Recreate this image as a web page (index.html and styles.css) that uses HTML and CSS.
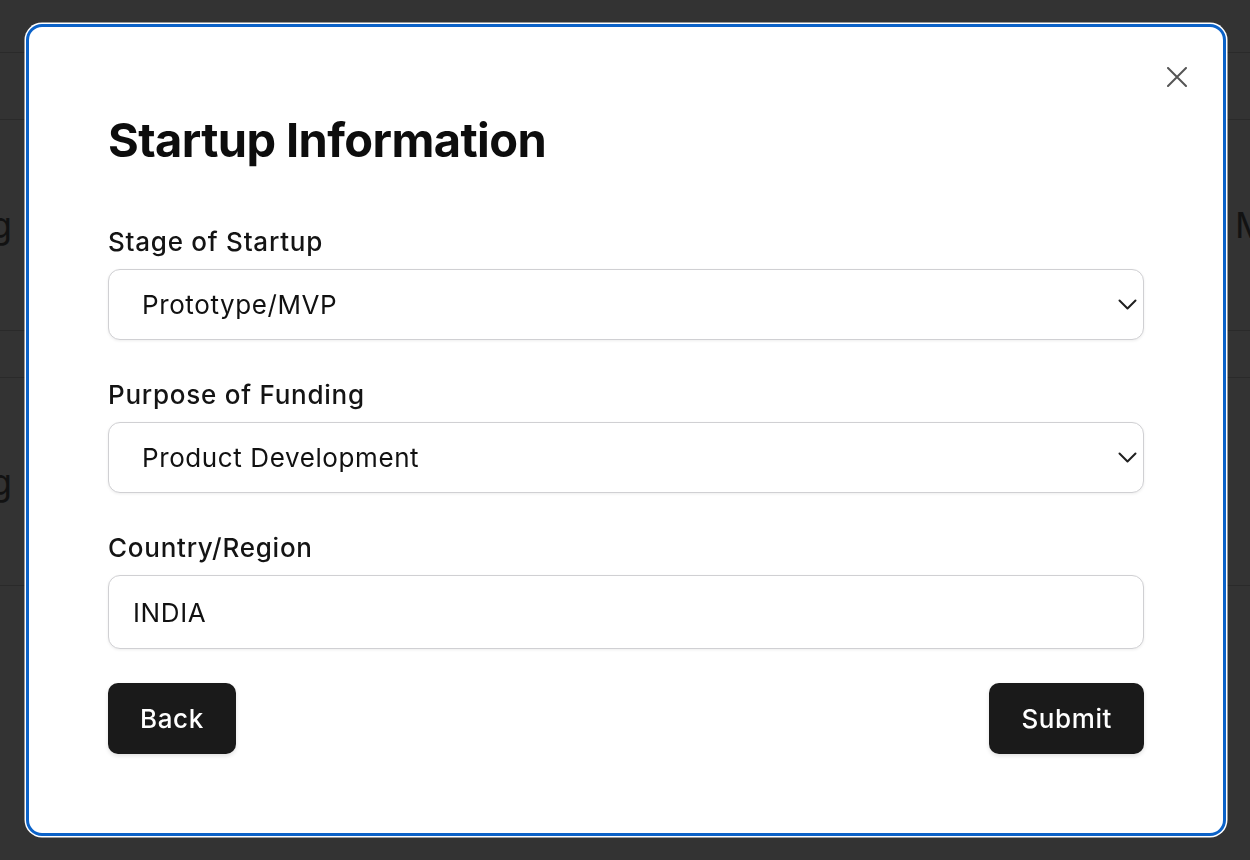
FILE: index.html
```html
<!DOCTYPE html>
<html lang="en">
<head>
<meta charset="utf-8">
<title>Startup Information</title>
<link rel="stylesheet" href="styles.css">
</head>
<body>
<div class="page">
  <div class="row row-head"></div>
  <div class="row row-sub"></div>
  <div class="row row-tall">
    <div class="cell-left"><span>Funding</span></div>
    <div class="cell-right"><span>Market</span></div>
  </div>
  <div class="row row-thin"></div>
  <div class="row row-tall2">
    <div class="cell-left"><span>Pricing</span></div>
  </div>
  <div class="row row-rest"></div>
</div>

<div class="overlay">
  <div class="modal" role="dialog" aria-labelledby="modal-title">
    <button class="close" aria-label="Close">
      <svg width="20" height="20" viewBox="0 0 20 20" fill="none" stroke="#555" stroke-width="2" stroke-linecap="round">
        <path d="M1 1L19 19M19 1L1 19"/>
      </svg>
    </button>
    <h1 id="modal-title" class="title">Startup Information</h1>

    <div class="field">
      <label class="label" for="stage">Stage of Startup</label>
      <div class="select-wrap">
        <select id="stage" class="control select">
          <option>Prototype/MVP</option>
        </select>
        <svg class="chev" width="19" height="11" viewBox="0 0 19 11" fill="none" stroke="#1f1f1f" stroke-width="2" stroke-linecap="round" stroke-linejoin="round">
          <path d="M1.5 1.5L9.5 9.5L17.5 1.5"/>
        </svg>
      </div>
    </div>

    <div class="field">
      <label class="label" for="purpose">Purpose of Funding</label>
      <div class="select-wrap">
        <select id="purpose" class="control select">
          <option>Product Development</option>
        </select>
        <svg class="chev" width="19" height="11" viewBox="0 0 19 11" fill="none" stroke="#1f1f1f" stroke-width="2" stroke-linecap="round" stroke-linejoin="round">
          <path d="M1.5 1.5L9.5 9.5L17.5 1.5"/>
        </svg>
      </div>
    </div>

    <div class="field field-last">
      <label class="label" for="country">Country/Region</label>
      <input id="country" class="control input" type="text" value="INDIA">
    </div>

    <div class="actions">
      <button class="btn">Back</button>
      <button class="btn">Submit</button>
    </div>
  </div>
</div>
</body>
</html>
```

FILE: styles.css
```css
* {
  box-sizing: border-box;
}

html, body {
  margin: 0;
  padding: 0;
  height: 100%;
}

body {
  background: #333333;
  font-family: Inter, "Noto Sans", "Liberation Sans", sans-serif;
  overflow: hidden;
}

/* background page (dimmed) */
.page {
  width: 100%;
  height: 100%;
  color: #121212;
  font-size: 36px;
}

.row {
  border-bottom: 1px solid #2a2a2a;
  display: flex;
  align-items: center;
  justify-content: space-between;
}

.row-head { height: 53px; }
.row-sub { height: 67px; }
.row-tall { height: 211px; }
.row-thin { height: 47px; }
.row-tall2 { height: 208px; }
.row-rest { border-bottom: none; }

.cell-left {
  width: 12px;
  display: flex;
  justify-content: flex-end;
  white-space: nowrap;
}

.cell-right {
  width: 15px;
  display: flex;
  justify-content: flex-start;
  white-space: nowrap;
  overflow: hidden;
}

/* modal */
.overlay {
  position: fixed;
  inset: 0;
  display: flex;
  align-items: center;
  justify-content: center;
}

.modal {
  position: relative;
  width: 1200px;
  margin-left: 2px;
  background: #ffffff;
  border: 3px solid #0b62c8;
  border-radius: 16px;
  box-shadow: 0 0 0 1.5px #ffffff;
  padding: 85px 79px 79px;
  color: #111111;
}

.close {
  position: absolute;
  top: 40px;
  right: 36px;
  width: 20px;
  height: 20px;
  padding: 0;
  border: none;
  background: none;
  display: flex;
}

.title {
  margin: 0 0 59px;
  font-size: 47px;
  line-height: 56px;
  font-weight: 700;
  letter-spacing: -0.6px;
  color: #0d0d0d;
}

.field {
  display: flex;
  flex-direction: column;
  gap: 12px;
  margin-bottom: 40px;
}

.field-last {
  margin-bottom: 34px;
}

.label {
  font-size: 26px;
  line-height: 30px;
  font-weight: 500;
  letter-spacing: 0.75px;
  color: #141414;
}

.select-wrap {
  position: relative;
}

.control {
  width: 100%;
  font-family: inherit;
  font-size: 26px;
  letter-spacing: 0.6px;
  color: #111111;
  background: #ffffff;
  border: 1.5px solid #d0d0d3;
  border-radius: 12px;
  box-shadow: 0 1px 3px rgba(0, 0, 0, 0.07);
  outline: none;
}

.select {
  appearance: none;
  -webkit-appearance: none;
  height: 71px;
  padding: 0 50px 0 33px;
}

.input {
  height: 74px;
  padding: 0 24px;
}

.chev {
  position: absolute;
  right: 7px;
  top: 30px;
  pointer-events: none;
}

.actions {
  display: flex;
  justify-content: space-between;
}

.btn {
  height: 71px;
  padding: 0 32px;
  font-family: inherit;
  font-size: 26px;
  font-weight: 500;
  letter-spacing: 0.6px;
  color: #ffffff;
  background: #1a1a1a;
  border: none;
  border-radius: 10px;
  box-shadow: 0 2px 4px rgba(0, 0, 0, 0.12);
}
```
